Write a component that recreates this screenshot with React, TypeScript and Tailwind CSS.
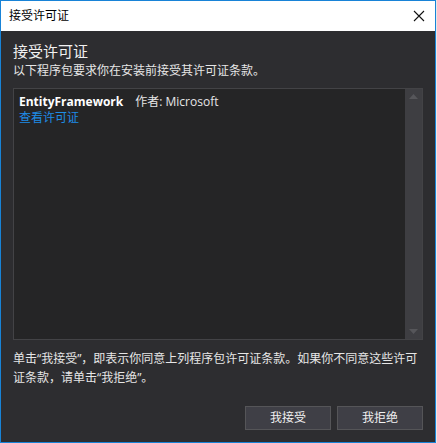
import React from "react";

const font = "font-['Segoe_UI','Open_Sans','Noto_Sans_CJK_SC',sans-serif]";

export default function App() {
  return (
    <div className={`w-[437px] h-[443px] bg-[#e8e8e8] ${font}`}>
      <div className="w-[436px] h-[443px] border border-[#1883d7] flex flex-col bg-[#2d2d30]">
        {/* title bar */}
        <div className="h-[30px] bg-white flex items-center justify-between pl-[8px] pr-[9px] shrink-0">
          <span className="text-[12px] text-black leading-none">接受许可证</span>
          <svg width="12" height="12" viewBox="0 0 12 12" className="mr-[1px]">
            <path d="M1 1 L11 11 M11 1 L1 11" stroke="#111" strokeWidth="1.1" />
          </svg>
        </div>

        <div className="flex-1 flex flex-col px-[12px]">
          <h1 className="mt-[10px] text-[15px] leading-[20px] text-[#f1f1f1]">接受许可证</h1>
          <p className="mt-[2px] text-[12px] leading-[16px] text-[#e6e6e6]">
            以下程序包要求你在安装前接受其许可证条款。
          </p>

          {/* package list */}
          <div className="mt-[9px] h-[252px] border border-[#434346] bg-[#252526] flex">
            <div className="flex-1 pl-[5px] pt-[5px]">
              <div className="flex items-center text-[12px] leading-[16px]">
                <span className="font-bold text-white">EntityFramework</span>
                <span className="ml-[12px] text-[#e6e6e6]">作者: Microsoft</span>
              </div>
              <div className="text-[12px] leading-[16px] text-[#1e8ce6]">查看许可证</div>
            </div>
            <div className="w-[17px] bg-[#3e3e42] flex flex-col items-center justify-between py-[5px]">
              <svg width="9" height="5" viewBox="0 0 9 5">
                <path d="M0 5 L4.5 0 L9 5 Z" fill="#56565a" />
              </svg>
              <svg width="9" height="5" viewBox="0 0 9 5">
                <path d="M0 0 L4.5 5 L9 0 Z" fill="#56565a" />
              </svg>
            </div>
          </div>

          <p className="mt-[9px] text-[12px] leading-[19px] text-[#e6e6e6] pr-[2px]">
            单击“我接受”，即表示你同意上列程序包许可证条款。如果你不同意这些许可证条款，请单击“我拒绝”。
          </p>

          <div className="mt-auto mb-[12px] flex justify-end gap-[6px]">
            <button className="w-[86px] h-[24px] bg-[#3f3f46] border border-[#555558] text-[12px] text-[#f1f1f1]">
              我接受
            </button>
            <button className="w-[86px] h-[24px] bg-[#3f3f46] border border-[#555558] text-[12px] text-[#f1f1f1]">
              我拒绝
            </button>
          </div>
        </div>
      </div>
    </div>
  );
}
